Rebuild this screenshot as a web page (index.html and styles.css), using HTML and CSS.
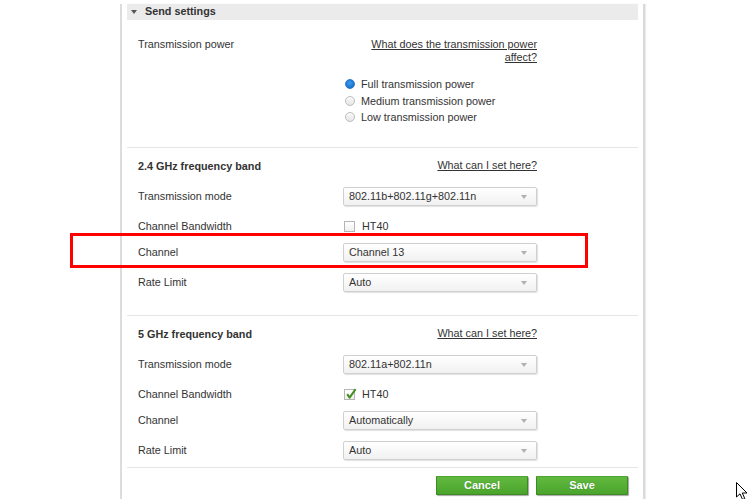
FILE: index.html
```html
<!DOCTYPE html>
<html>
<head>
<meta charset="utf-8">
<link rel="stylesheet" href="styles.css">
</head>
<body>
<div class="page">
  <div class="panel-head"><span class="tri"></span><span class="head-title">Send settings</span></div>

  <div class="power">
    <div class="label">Transmission power</div>
    <div class="power-right">
      <a class="help" href="#">What does the transmission power affect?</a>
      <div class="radios">
        <div class="radio-row"><span class="radio checked"></span><span>Full transmission power</span></div>
        <div class="radio-row"><span class="radio"></span><span>Medium transmission power</span></div>
        <div class="radio-row"><span class="radio"></span><span>Low transmission power</span></div>
      </div>
    </div>
  </div>

  <div class="band first">
    <div class="band-head"><span class="band-title">2.4 GHz frequency band</span><a class="help" href="#">What can I set here?</a></div>
    <div class="rows">
      <div class="row"><span class="label">Transmission mode</span><div class="select">802.11b+802.11g+802.11n<span class="arrow"></span></div></div>
      <div class="row check-row"><span class="label">Channel Bandwidth</span><div class="check"><span class="box"></span><span>HT40</span></div></div>
      <div class="row"><span class="label">Channel</span><div class="select">Channel 13<span class="arrow"></span></div></div>
      <div class="row"><span class="label">Rate Limit</span><div class="select">Auto<span class="arrow"></span></div></div>
    </div>
  </div>

  <div class="band last">
    <div class="band-head"><span class="band-title">5 GHz frequency band</span><a class="help" href="#">What can I set here?</a></div>
    <div class="rows">
      <div class="row"><span class="label">Transmission mode</span><div class="select">802.11a+802.11n<span class="arrow"></span></div></div>
      <div class="row check-row"><span class="label">Channel Bandwidth</span><div class="check"><span class="box"><svg class="tick" width="12" height="12" viewBox="0 0 12 12"><path d="M2.2 6.2 L4.6 9.6 L10.6 1.2" fill="none" stroke="#3f8f20" stroke-width="2" stroke-linejoin="round"/></svg></span><span>HT40</span></div></div>
      <div class="row"><span class="label">Channel</span><div class="select">Automatically<span class="arrow"></span></div></div>
      <div class="row"><span class="label">Rate Limit</span><div class="select">Auto<span class="arrow"></span></div></div>
    </div>
  </div>

  <div class="footer">
    <button class="btn">Cancel</button>
    <button class="btn">Save</button>
  </div>
</div>

<div class="highlight"></div>

<svg class="cursor" width="14" height="20" viewBox="0 0 14 20"><path d="M0.5 0.5 L0.5 15 L4 11.8 L6.6 17.6 L8.8 16.6 L6.3 11 L11 11 Z" fill="#fff" stroke="#000" stroke-width="1" stroke-linejoin="miter"/></svg>
</body>
</html>
```

FILE: styles.css
```css
html, body {
  margin: 0;
  padding: 0;
  background: #fff;
  height: 100%;
  overflow: hidden;
}
body {
  font-family: "Liberation Sans", Arial, sans-serif;
  font-size: 10.8px;
  color: #333;
  position: relative;
}
.page {
  margin-left: 120px;
  width: 511px;
  padding: 0 5px;
  min-height: 100%;
  box-sizing: content-box;
  border-left: 2px solid #dcdcdc;
  border-right: 2px solid #dadada;
  box-shadow: 1px 0 1px #ececec;
}
.panel-head {
  margin-top: 4px;
  height: 16px;
  box-sizing: border-box;
  padding-bottom: 2px;
  background: #ebebeb;
  display: flex;
  align-items: center;
  padding-left: 4px;
}
.tri {
  width: 0;
  height: 0;
  border-left: 3px solid transparent;
  border-right: 3px solid transparent;
  border-top: 4px solid #555;
  margin-top: 2px;
}
.head-title {
  margin-left: 8px;
  font-weight: bold;
  color: #333;
}
.label {
  color: #333;
  line-height: 13px;
}
.help {
  color: #333;
  text-decoration: underline;
  line-height: 13px;
}
.power {
  display: grid;
  grid-template-columns: 205px 194px;
  padding: 18px 0 21px 11px;
}
.power-right {
  display: flex;
  flex-direction: column;
}
.power-right .help {
  text-align: right;
}
.radios {
  margin-top: 12px;
  display: flex;
  flex-direction: column;
}
.radio-row {
  height: 16.5px;
  display: flex;
  align-items: center;
  gap: 6px;
  padding-left: 2px;
}
.radio {
  width: 8px;
  height: 8px;
  border-radius: 50%;
  border: 1px solid #bdbdbd;
  background: linear-gradient(#fafafa, #e6e6e6);
  box-sizing: content-box;
}
.radio.checked {
  border-color: #2a78c6;
  background: radial-gradient(circle at 45% 40%, #3d9cf0 0, #1673cf 70%);
}
.band {
  border-top: 1px solid #e6e6e6;
  padding: 11px 0 23px 11px;
}
.band.last {
  padding-bottom: 7px;
}
.band-head {
  width: 399px;
  height: 14px;
  display: flex;
  justify-content: space-between;
  align-items: center;
}
.band-title {
  font-weight: bold;
  color: #333;
}
.rows {
  margin-top: 14px;
  display: flex;
  flex-direction: column;
  gap: 11px;
}
.row {
  display: grid;
  grid-template-columns: 205px 194px;
  height: 19px;
  align-items: center;
}
.row.check-row {
  margin-bottom: -4px;
}
.select {
  position: relative;
  height: 19px;
  box-sizing: border-box;
  border: 1px solid #d0d0d0;
  border-radius: 2px;
  background: linear-gradient(#ffffff, #f1f1f1);
  box-shadow: 1px 1px 1px rgba(0,0,0,0.12);
  padding-left: 5px;
  line-height: 17px;
  color: #333;
}
.arrow {
  position: absolute;
  right: 9px;
  top: 7px;
  width: 0;
  height: 0;
  border-left: 3.5px solid transparent;
  border-right: 3.5px solid transparent;
  border-top: 4px solid #b0b0b0;
}
.check {
  display: flex;
  align-items: center;
  gap: 7px;
  padding-left: 1px;
}
.box {
  position: relative;
  width: 9px;
  height: 9px;
  border: 1px solid #b5b5b5;
  background: linear-gradient(#fff, #f0f0f0);
  box-sizing: content-box;
}
.tick {
  position: absolute;
  left: 0;
  top: -2px;
}
.footer {
  border-top: 1px solid #e6e6e6;
  padding: 8px 10px 0 0;
  display: flex;
  justify-content: flex-end;
  gap: 8px;
}
.btn {
  width: 92px;
  height: 19px;
  border: 1px solid #3d8a22;
  border-top-color: #4fa331;
  border-radius: 1px;
  background: linear-gradient(#62b940, #4aa42c);
  box-shadow: 1px 1px 1px rgba(0,0,0,0.35);
  color: #fff;
  font-family: "Liberation Sans", Arial, sans-serif;
  font-weight: bold;
  font-size: 11px;
  padding: 0;
  text-shadow: 0 0 1px rgba(0,60,0,0.4);
}
.highlight {
  position: absolute;
  left: 70px;
  top: 233px;
  width: 518px;
  height: 35px;
  box-sizing: border-box;
  border: 3px solid #ff0000;
}
.cursor {
  position: absolute;
  left: 736px;
  top: 482px;
}
```
